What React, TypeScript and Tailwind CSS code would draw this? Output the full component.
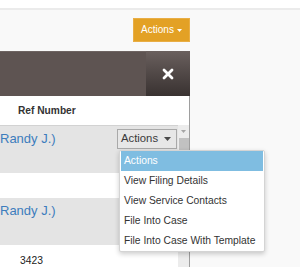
import React from "react";

const font = { fontFamily: '"Liberation Sans", Arial, sans-serif' };

function Caret({ color, w = 6, h = 3 }: { color: string; w?: number; h?: number }) {
  return (
    <svg width={w} height={h} viewBox={`0 0 ${w} ${h}`} className="block">
      <polygon points={`0,0 ${w},0 ${w / 2},${h}`} fill={color} />
    </svg>
  );
}

function Select() {
  return (
    <div className="h-[20px] w-[60px] border border-[#a9a9a9] bg-[#e7e7e7] flex items-center pl-[3px] gap-[6px] box-border">
      <span className="text-[11.3px] leading-none text-[#3a3a3a]">Actions</span>
      <Caret color="#4a4a4a" w={7} h={4} />
    </div>
  );
}

export default function App() {
  const items = [
    "Actions",
    "View Filing Details",
    "View Service Contacts",
    "File Into Case",
    "File Into Case With Template",
  ];
  return (
    <div className="relative w-[300px] h-[267px] overflow-hidden bg-[#f9f9f9]" style={font}>
      <div className="h-[8px] bg-white" />
      <div className="h-[2px] bg-[#ebebeb]" />
      <div className="w-[190px] h-[41px] flex justify-end pt-[8px]">
        <div className="h-[24px] w-[57px] bg-[#e3a125] border border-[#e9ae45] flex items-center justify-center gap-[3px] box-border">
          <span className="text-[10px] leading-none text-white">Actions</span>
          <Caret color="#ffffff" w={5} h={3} />
        </div>
      </div>
      <div className="w-[190px]">
        <div className="h-[45px] flex">
          <div className="flex-1 bg-[#5e5452] border-t border-[#6e6462]" />
          <div className="w-[44px] flex items-center justify-center bg-gradient-to-b from-[#6a605e] to-[#393231]">
            <svg width="12" height="12" viewBox="0 0 12 12">
              <path d="M2 2 L10 10 M10 2 L2 10" stroke="#ffffff" strokeWidth="2.8" strokeLinecap="round" />
            </svg>
          </div>
        </div>
        <div className="bg-white border-r border-[#9e9e9e]">
          <div className="h-[29px] flex items-center pl-[18px]">
            <span className="text-[10.2px] font-bold text-[#333]">Ref Number</span>
          </div>
          <div className="flex">
            <div className="w-[178px]">
              <div className="h-[48px] bg-[#e4e4e4] border-t border-[#d2d2d2] flex justify-between items-start pt-[3px] pr-[1px] box-border">
                <span className="text-[13px] leading-[20px] text-[#3d7dbd]">Randy J.)</span>
                <Select />
              </div>
              <div className="h-[25px] bg-white" />
              <div className="h-[47px] bg-[#e4e4e4] flex justify-between items-start pt-[3px] pr-[1px]">
                <span className="text-[13px] leading-[20px] text-[#3d7dbd]">Randy J.)</span>
              </div>
              <div className="h-[30px] bg-white pl-[20px] pt-[2px]">
                <span className="text-[10.3px] leading-[20px] text-[#222]">3423</span>
              </div>
            </div>
            <div className="w-[11px] bg-[#ececec] flex flex-col items-center pt-[5px]">
              <Caret color="#a5a5a5" w={5} h={3} />
              <div className="mt-[5px] w-[10px] h-[90px] bg-[#c1c1c1]" />
            </div>
          </div>
        </div>
      </div>
      <div className="absolute left-[119px] top-[150px] w-[146px] bg-white border border-[#d4d4d4] px-[1px] shadow-[0_2px_5px_rgba(0,0,0,0.2)] rounded-[2px]">
        {items.map((t, i) => (
          <div
            key={t}
            className={
              i === 0
                ? "h-[20px] flex items-center pl-[3px] bg-[#7fbde1] text-white text-[10.3px]"
                : "h-[20px] flex items-center pl-[3px] text-[#333] text-[10.3px]"
            }
          >
            {t}
          </div>
        ))}
      </div>
    </div>
  );
}
